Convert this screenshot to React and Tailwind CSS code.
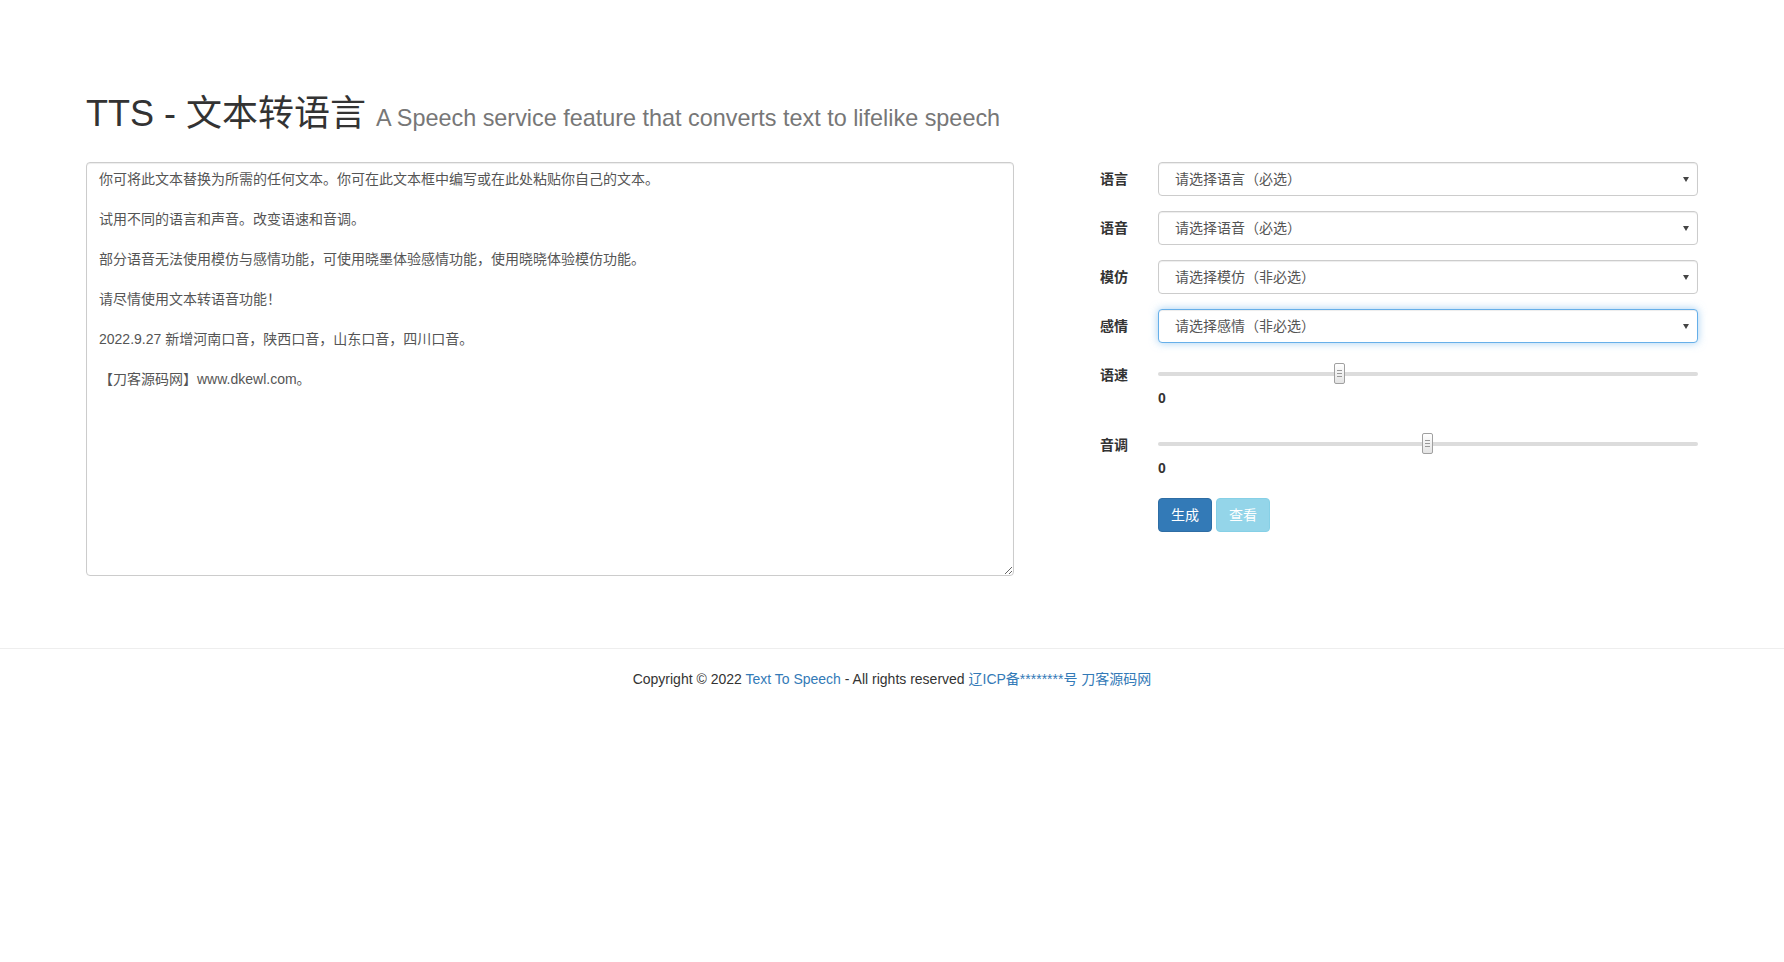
const font = { fontFamily: '"Liberation Sans", Arial, "Noto Sans CJK SC", sans-serif' }

const sampleText = `你可将此文本替换为所需的任何文本。你可在此文本框中编写或在此处粘贴你自己的文本。

试用不同的语言和声音。改变语速和音调。

部分语音无法使用模仿与感情功能，可使用晓墨体验感情功能，使用晓晓体验模仿功能。

请尽情使用文本转语音功能！

2022.9.27 新增河南口音，陕西口音，山东口音，四川口音。

【刀客源码网】www.dkewl.com。`

function FakeSelect({ text, focused }) {
  return (
    <div
      className={`flex h-[34px] items-center justify-between rounded-[4px] border bg-white pl-4 pr-[8px] text-[14px] text-[#555] ${
        focused
          ? 'border-[#66afe9] shadow-[inset_0_1px_1px_rgba(0,0,0,0.075),0_0_8px_rgba(102,175,233,0.6)]'
          : 'border-[#ccc] shadow-[inset_0_1px_1px_rgba(0,0,0,0.075)]'
      }`}
    >
      <span>{text}</span>
      <svg width="6" height="5" viewBox="0 0 6 5">
        <path d="M0 0h6L3 5z" fill="#444" />
      </svg>
    </div>
  )
}

function FieldRow({ label, children }) {
  return (
    <div className="mb-[15px] flex">
      <label className="w-[99px] shrink-0 pt-[7px] text-right text-[14px] font-bold leading-5 text-[#333]">
        {label}
      </label>
      <div className="ml-[30px] flex-1">{children}</div>
    </div>
  )
}

function Slider({ thumbLeft }) {
  return (
    <div className="relative mt-[4px] flex h-[21px] items-center">
      <div className="h-[4px] w-full rounded-full bg-[#dcdcdc]" />
      <div
        className="absolute top-0 flex h-[21px] w-[11px] flex-col items-center justify-center gap-[2px] rounded-[2px] border border-[#a0a0a0] bg-gradient-to-b from-white to-[#e4e4e4]"
        style={{ left: thumbLeft }}
      >
        <span className="h-px w-[5px] bg-[#999]" />
        <span className="h-px w-[5px] bg-[#999]" />
        <span className="h-px w-[5px] bg-[#999]" />
      </div>
    </div>
  )
}

function SliderRow({ label, thumbLeft, last }) {
  return (
    <div className={`flex ${last ? 'mb-[20px]' : 'mb-[21px]'}`}>
      <label className="w-[99px] shrink-0 pt-[6px] text-right text-[14px] font-bold leading-5 text-[#333]">
        {label}
      </label>
      <div className="ml-[30px] flex-1">
        <Slider thumbLeft={thumbLeft} />
        <div className="mt-[4px] text-[14px] font-bold leading-5 text-[#333]">0</div>
      </div>
    </div>
  )
}

export default function App() {
  return (
    <div className="min-h-screen bg-white text-[#333]" style={font}>
      <div className="px-[86px] pt-[94px]">
        <h1 className="mb-[28px] h-[40px] text-[36px] font-normal leading-[40px] text-[#333]">
          TTS - 文本转语言 <small className="text-[23.4px] font-normal leading-none text-[#777]">A Speech service feature that converts text to lifelike speech</small>
        </h1>

        <div className="flex">
          <textarea
            className="h-[414px] w-[928px] shrink-0 rounded-[4px] border border-[#ccc] px-3 py-1.5 text-[14px] leading-5 text-[#555] shadow-[inset_0_1px_1px_rgba(0,0,0,0.075)] outline-none"
            style={font}
            defaultValue={sampleText}
          />

          <div className="ml-[15px] flex-1">
            <FieldRow label="语言">
              <FakeSelect text="请选择语言（必选）" />
            </FieldRow>
            <FieldRow label="语音">
              <FakeSelect text="请选择语音（必选）" />
            </FieldRow>
            <FieldRow label="模仿">
              <FakeSelect text="请选择模仿（非必选）" />
            </FieldRow>
            <FieldRow label="感情">
              <FakeSelect text="请选择感情（非必选）" focused />
            </FieldRow>

            <div className="pt-px">
              <SliderRow label="语速" thumbLeft={176} />
              <SliderRow label="音调" thumbLeft={264} last />
            </div>

            <div className="ml-[129px] flex gap-1">
              <button className="h-[34px] rounded-[4px] border border-[#2e6da4] bg-[#337ab7] px-3 text-[14px] leading-5 text-white">
                生成
              </button>
              <button className="h-[34px] rounded-[4px] border border-[#46b8da] bg-[#5bc0de] px-3 text-[14px] leading-5 text-white opacity-65">
                查看
              </button>
            </div>
          </div>
        </div>
      </div>

      <footer className="mt-[72px] border-t border-[#eee] pt-[20px] text-center text-[14px] leading-5 text-[#333]">
        Copyright © 2022 <a className="text-[#337ab7]">Text To Speech</a> - All rights reserved{' '}
        <a className="text-[#337ab7]">辽ICP备********号</a> <a className="text-[#337ab7]">刀客源码网</a>
      </footer>
    </div>
  )
}
